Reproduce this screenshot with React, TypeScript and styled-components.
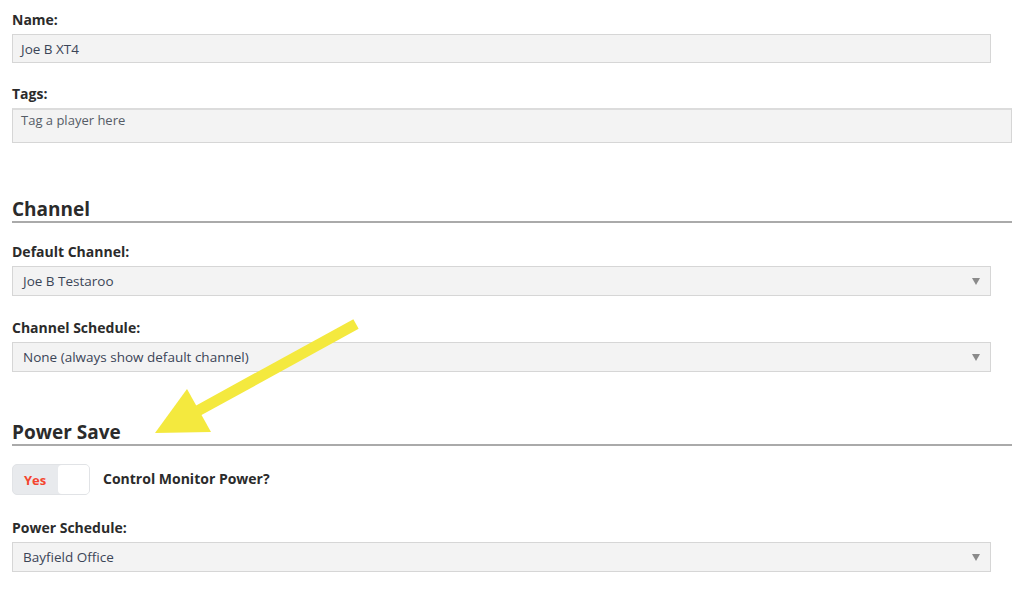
import React from "react";
import styled, { createGlobalStyle } from "styled-components";

const GlobalStyle = createGlobalStyle`
  body {
    margin: 0;
    background: #fff;
    font-family: "Open Sans", "Noto Sans", sans-serif;
    overflow: hidden;
  }
`;

const Page = styled.div`
  position: relative;
  width: 1012px;
  height: 594px;
  padding: 11px 0 0 12px;
  box-sizing: border-box;
`;

const Field = styled.div<{ $top?: number }>`
  display: flex;
  flex-direction: column;
  gap: 5px;
  margin-top: ${(p) => p.$top ?? 0}px;
`;

const Label = styled.label`
  font-size: 14px;
  line-height: 18px;
  font-weight: 700;
  color: #2b2b2b;
`;

const TextInput = styled.div`
  width: 979px;
  height: 29px;
  box-sizing: border-box;
  background: #f3f3f3;
  border: 1px solid #d6d6d6;
  padding: 0 8px;
  display: flex;
  align-items: center;
  font-size: 13.5px;
  color: #3b4557;
`;

const TagBox = styled.div`
  width: 1000px;
  height: 35px;
  box-sizing: border-box;
  background: #f3f3f3;
  border: 1px solid #d6d6d6;
  border-top: 2px solid #dcdcdc;
  padding: 1px 8px;
  font-size: 13px;
  color: #555c66;
`;

const Select = styled.div`
  width: 979px;
  height: 30px;
  box-sizing: border-box;
  background: #f3f3f3;
  border: 1px solid #d6d6d6;
  padding: 0 10px;
  display: flex;
  align-items: center;
  justify-content: space-between;
  font-size: 13.5px;
  color: #3b4557;
`;

const Caret = styled.span`
  width: 0;
  height: 0;
  border-left: 4px solid transparent;
  border-right: 4px solid transparent;
  border-top: 7px solid #8a8a8a;
`;

const Heading = styled.h2<{ $top: number }>`
  margin: ${(p) => p.$top}px 0 0;
  font-size: 19px;
  line-height: 24px;
  font-weight: 700;
  color: #2b2b2b;
  border-bottom: 2px solid #aaaaaa;
`;

const ToggleRow = styled.div`
  display: flex;
  align-items: center;
  gap: 13px;
  margin-top: 18px;
`;

const Toggle = styled.div`
  width: 78px;
  height: 31px;
  box-sizing: border-box;
  background: #e8eaed;
  border: 1px solid #e1e3e6;
  border-radius: 5px;
  display: flex;
  align-items: center;
  justify-content: space-between;
  padding-left: 11px;
`;

const ToggleText = styled.span`
  font-size: 13px;
  font-weight: 700;
  color: #f4452f;
`;

const Knob = styled.span`
  width: 31px;
  height: 29px;
  background: #fff;
  border-radius: 4px;
`;

const ToggleLabel = styled.span`
  font-size: 14px;
  font-weight: 700;
  color: #2b2b2b;
  margin-top: -3px;
`;

const Overlay = styled.svg`
  position: absolute;
  left: 0;
  top: 0;
  pointer-events: none;
`;

function Arrow() {
  return (
    <Overlay width="1012" height="594" viewBox="0 0 1012 594">
      <line x1="356" y1="324" x2="192" y2="414" stroke="#f4e93e" strokeWidth="11" />
      <polygon points="187,389 155,433 211,432" fill="#f4e93e" />
    </Overlay>
  );
}

export default function App() {
  return (
    <Page>
      <GlobalStyle />
      <Field>
        <Label>Name:</Label>
        <TextInput>Joe B XT4</TextInput>
      </Field>
      <Field $top={22}>
        <Label>Tags:</Label>
        <TagBox>Tag a player here</TagBox>
      </Field>

      <Heading $top={54}>Channel</Heading>
      <Field $top={20}>
        <Label>Default Channel:</Label>
        <Select>
          Joe B Testaroo
          <Caret />
        </Select>
      </Field>
      <Field $top={23}>
        <Label>Channel Schedule:</Label>
        <Select>
          None (always show default channel)
          <Caret />
        </Select>
      </Field>

      <Heading $top={48}>Power Save</Heading>
      <ToggleRow>
        <Toggle>
          <ToggleText>Yes</ToggleText>
          <Knob />
        </Toggle>
        <ToggleLabel>Control Monitor Power?</ToggleLabel>
      </ToggleRow>
      <Field $top={24}>
        <Label>Power Schedule:</Label>
        <Select>
          Bayfield Office
          <Caret />
        </Select>
      </Field>
      <Arrow />
    </Page>
  );
}
